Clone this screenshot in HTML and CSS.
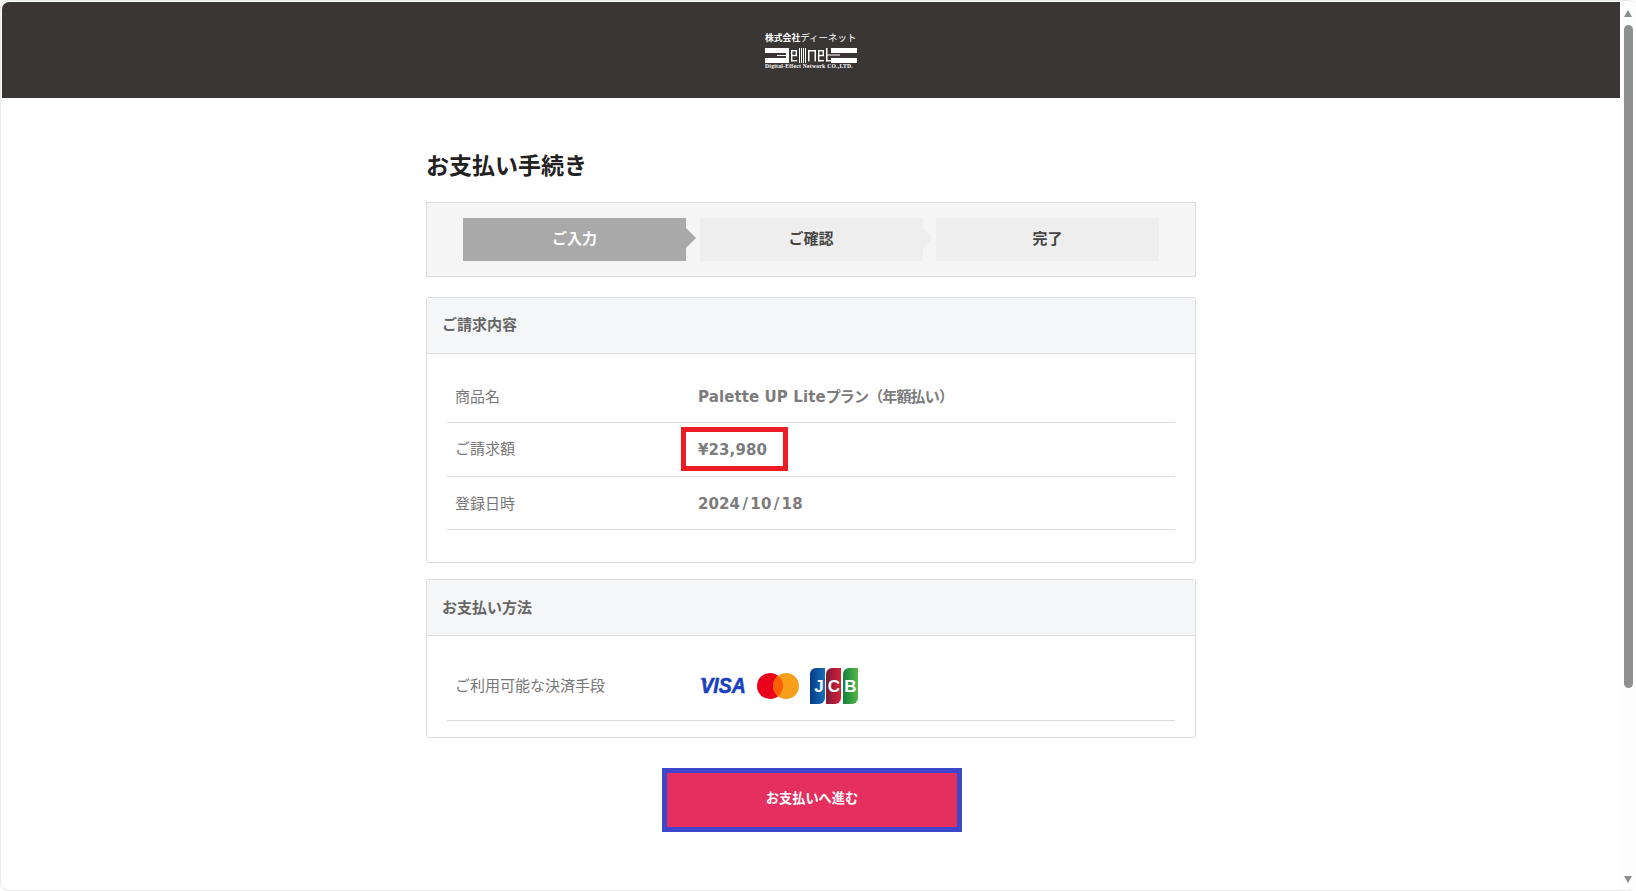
FILE: index.html
```html
<!DOCTYPE html>
<html lang="ja">
<head>
<meta charset="utf-8">
<title>お支払い手続き</title>
<link rel="stylesheet" href="styles.css">
</head>
<body>
<div class="window">
  <div class="page">
    <header class="site-header">
      <div class="logo">
        <div class="logo-top"><span class="logo-kanji">株式会社</span><span class="logo-kana">ディーネット</span></div>
        <svg class="logo-mark" width="92" height="15" viewBox="0 0 92 15" fill="#fff" aria-hidden="true">
          <rect x="0" y="0" width="24" height="5"/><rect x="0" y="10" width="24" height="5"/><rect x="12" y="7" width="12" height="1"/><rect x="21" y="5" width="3" height="5"/>
          <rect x="26" y="2" width="6" height="1.4"/><rect x="26" y="6.8" width="6" height="1.4"/><rect x="26" y="12" width="6" height="1.4"/><rect x="26" y="2" width="1.4" height="11.4"/><rect x="30.6" y="2" width="1.4" height="6"/>
          <rect x="34" y="0" width="1" height="15"/><rect x="36" y="0" width="1" height="15"/><rect x="38" y="0" width="1" height="15"/><rect x="40" y="0" width="1" height="15"/>
          <rect x="43" y="2" width="8" height="1.5"/><rect x="43" y="2" width="1.5" height="11.4"/><rect x="49.5" y="2" width="1.5" height="11.4"/>
          <rect x="53" y="2" width="6" height="1.4"/><rect x="53" y="6.8" width="6" height="1.4"/><rect x="53" y="12" width="6" height="1.4"/><rect x="53" y="2" width="1.4" height="11.4"/><rect x="57.6" y="2" width="1.4" height="6"/>
          <rect x="61" y="0" width="1.5" height="13.4"/><rect x="61" y="12" width="6" height="1.4"/>
          <rect x="66" y="0" width="26" height="5"/><rect x="66" y="10" width="26" height="5"/><rect x="61" y="6.5" width="14" height="1"/>
        </svg>
        <div class="logo-bottom">Digital-Effect Network CO.,LTD.</div>
      </div>
    </header>

    <main class="content">
      <h1 class="title">お支払い手続き</h1>

      <ol class="steps">
        <li class="step step-active">ご入力</li>
        <li class="step">ご確認</li>
        <li class="step step-last">完了</li>
      </ol>

      <section class="card card-billing">
        <h2 class="card-head">ご請求内容</h2>
        <div class="card-body">
          <div class="row row-low">
            <div class="row-label">商品名</div>
            <div class="row-value">Palette UP Lite<span class="value-ja">プラン（年額払い）</span></div>
          </div>
          <div class="row">
            <div class="row-label row-label-up">ご請求額</div>
            <div class="row-value row-marked">¥23,980<span class="mark-red"></span></div>
          </div>
          <div class="row row-low">
            <div class="row-label">登録日時</div>
            <div class="row-value">2024<span class="slash">/</span>10<span class="slash">/</span>18</div>
          </div>
        </div>
      </section>

      <section class="card card-method">
        <h2 class="card-head card-head-low">お支払い方法</h2>
        <div class="card-body">
          <div class="row row-tall">
            <div class="row-label">ご利用可能な決済手段</div>
            <div class="brands">
              <svg class="brand" width="46" height="26" viewBox="0 0 46 23.1" preserveAspectRatio="none" aria-label="VISA">
                <path d="M0 4.8h5.5l1.4 4.6L3.5 6.6 0 5.2z" fill="#1a3fbf"/>
                <text x="0.4" y="18" class="visa-text">VISA</text>
              </svg>
              <svg class="brand" width="42" height="26" viewBox="0 0 42 26" aria-label="Mastercard">
                <circle cx="13" cy="13" r="13" fill="#eb001b"/>
                <circle cx="29" cy="13" r="13" fill="#f79e1b"/>
                <path d="M21 2.75a13 13 0 0 1 0 20.5 13 13 0 0 1 0-20.5z" fill="#ff5f00"/>
              </svg>
              <svg class="brand" width="48" height="36" viewBox="0 0 48 36" aria-label="JCB">
                <defs>
                  <linearGradient id="jb" x1="0" x2="1" y1="0" y2="0"><stop offset="0" stop-color="#0a3a8c"/><stop offset="1" stop-color="#1170b8"/></linearGradient>
                  <linearGradient id="jr" x1="0" x2="1" y1="0" y2="0"><stop offset="0" stop-color="#7c1a3a"/><stop offset="1" stop-color="#d8203a"/></linearGradient>
                  <linearGradient id="jg" x1="0" x2="1" y1="0" y2="0"><stop offset="0" stop-color="#15803d"/><stop offset="1" stop-color="#52b848"/></linearGradient>
                </defs>
                <path d="M0 6a6 6 0 0 1 6-6h9v30a6 6 0 0 1-6 6H0z" fill="url(#jb)"/>
                <path d="M16 6a6 6 0 0 1 6-6h9v30a6 6 0 0 1-6 6h-9z" fill="url(#jr)"/>
                <path d="M33 6a6 6 0 0 1 6-6h9v30a6 6 0 0 1-6 6h-9z" fill="url(#jg)"/>
                <text x="9" y="24" class="jcb-text">J</text>
                <text x="24" y="24" class="jcb-text">C</text>
                <text x="40.5" y="24" class="jcb-text">B</text>
              </svg>
            </div>
          </div>
        </div>
      </section>

      <div class="actions">
        <button class="pay-button" type="button">お支払いへ進む</button>
      </div>
    </main>
  </div>

  <aside class="scrollbar" aria-hidden="true">
    <span class="arrow-up"></span>
    <span class="thumb"></span>
    <span class="arrow-down"></span>
  </aside>
</div>
</body>
</html>
```
FILE: styles.css
```css
* { box-sizing: border-box; }
html, body { margin: 0; padding: 0; height: 100%; overflow: hidden; background: #fff; }
body {
  font-family: "DejaVu Sans", "Noto Sans CJK JP", sans-serif;
  color: #777;
}
.window {
  height: 891px;
  display: flex;
  padding: 1px 0 1px 1px;
  border: 1px solid #e9e9e9;
  border-right: 0;
  border-radius: 8px;
  overflow: hidden;
}
.page { width: 1618px; flex: none; }

.site-header {
  height: 96px;
  background: #3a3635;
  border-top-left-radius: 7px;
  display: flex;
  align-items: center;
  justify-content: center;
}
.logo { width: 92px; color: #fff; display: flex; flex-direction: column; margin-top: 2px; }
.logo-top { display: flex; align-items: baseline; height: 9px; line-height: 9px; margin-bottom: 6px; white-space: nowrap; font-family: "Noto Sans CJK JP", sans-serif; }
.logo-kanji { font-size: 8.8px; font-weight: 700; }
.logo-kana { font-size: 9.5px; font-weight: 400; }
.logo-mark { display: block; }
.logo-bottom {
  font-family: "Liberation Serif", serif;
  font-size: 5.6px;
  font-weight: 700;
  line-height: 7px;
  white-space: nowrap;
  letter-spacing: .27px;
}

.content { width: 770px; margin: 0 auto; }
.title {
  margin: 0;
  padding-top: 48px;
  height: 104px;
  font-size: 23px;
  line-height: 41px;
  font-weight: 700;
  color: #222;
}

.steps {
  list-style: none;
  margin: 0;
  padding: 15px 36px;
  height: 75px;
  display: grid;
  grid-template-columns: 223px 223px 223px;
  justify-content: space-between;
  background: #f5f5f5;
  border: 1px solid #ddd;
}
.step {
  position: relative;
  height: 43px;
  line-height: 43px;
  text-align: center;
  font-size: 15px;
  font-weight: 700;
  color: #444;
  background: #eee;
}
.step::after {
  content: "";
  position: absolute;
  left: 100%;
  top: 10px;
  border-style: solid;
  border-width: 10px 0 10px 10px;
  border-color: transparent transparent transparent #eee;
}
.step-active { background: #a9a9a9; color: #fff; }
.step-active::after { border-left-color: #a9a9a9; }
.step-last::after { display: none; }

.card {
  border: 1px solid #ddd;
  border-radius: 3px;
  background: #fff;
}
.card-billing { margin-top: 20px; height: 266px; }
.card-method { margin-top: 16px; height: 159px; }
.card-head {
  margin: 0;
  height: 56px;
  padding: 0 15px;
  background: #f5f6f8;
  border-bottom: 1px solid #ddd;
  font-size: 15px;
  line-height: 55px;
  font-weight: 700;
  color: #666;
}
.card-head-low { line-height: 57px; }
.card-body { padding: 16px 20px 0; }
.row {
  display: grid;
  grid-template-columns: 243px 1fr;
  align-items: center;
  height: 53.4px;
  padding: 0 8px;
  border-bottom: 1px solid #ddd;
  font-size: 15px;
  line-height: 20px;
}
.row-low { padding-top: 2px; }
.row-tall { height: 69px; }
.row-label { color: #777; }
.row-label-up { margin-top: -2px; }
.row-value { font-weight: 700; color: #7c7c7c; letter-spacing: .1px; white-space: nowrap; }
.value-ja { letter-spacing: -.85px; }
.slash { padding: 0 2.3px; }
.row-marked { position: relative; }
.mark-red {
  position: absolute;
  left: -17px;
  top: -13px;
  width: 107px;
  height: 44px;
  border: 5px solid #ed1c24;
}

.brands { display: flex; align-items: center; gap: 11px; margin-left: 2px; }
.brand { display: block; flex: none; }
.visa-text { font-family: "Liberation Sans", sans-serif; font-size: 19.4px; font-weight: 700; font-style: italic; fill: #1a3fbf; stroke: #1a3fbf; stroke-width: .5px; }
.jcb-text { font-family: "Liberation Sans", sans-serif; font-size: 17px; font-weight: 700; fill: #fff; text-anchor: middle; }

.actions { display: flex; justify-content: center; margin-top: 30px; }
.pay-button {
  width: 300px;
  height: 64px;
  margin-left: 2px;
  border: 5px solid #3f47cc;
  background: #e5305f;
  color: #fff;
  font-family: "Noto Sans CJK JP", sans-serif;
  font-size: 13.2px;
  font-weight: 700;
  padding: 0 0 6px;
}

.scrollbar {
  flex: 1;
  background: #fdfdfd;
  display: flex;
  flex-direction: column;
  align-items: center;
  padding-top: 8px;
}
.arrow-up, .arrow-down { width: 0; height: 0; border-style: solid; flex: none; }
.arrow-up { border-width: 0 4.5px 7px; border-color: transparent transparent #8c8c8c; }
.arrow-down { border-width: 7px 4.5px 0; border-color: #8c8c8c transparent transparent; margin-top: 188px; }
.thumb { width: 9px; height: 663px; margin-top: 8px; background: #8f8f8f; border-radius: 4.5px; flex: none; }
```
